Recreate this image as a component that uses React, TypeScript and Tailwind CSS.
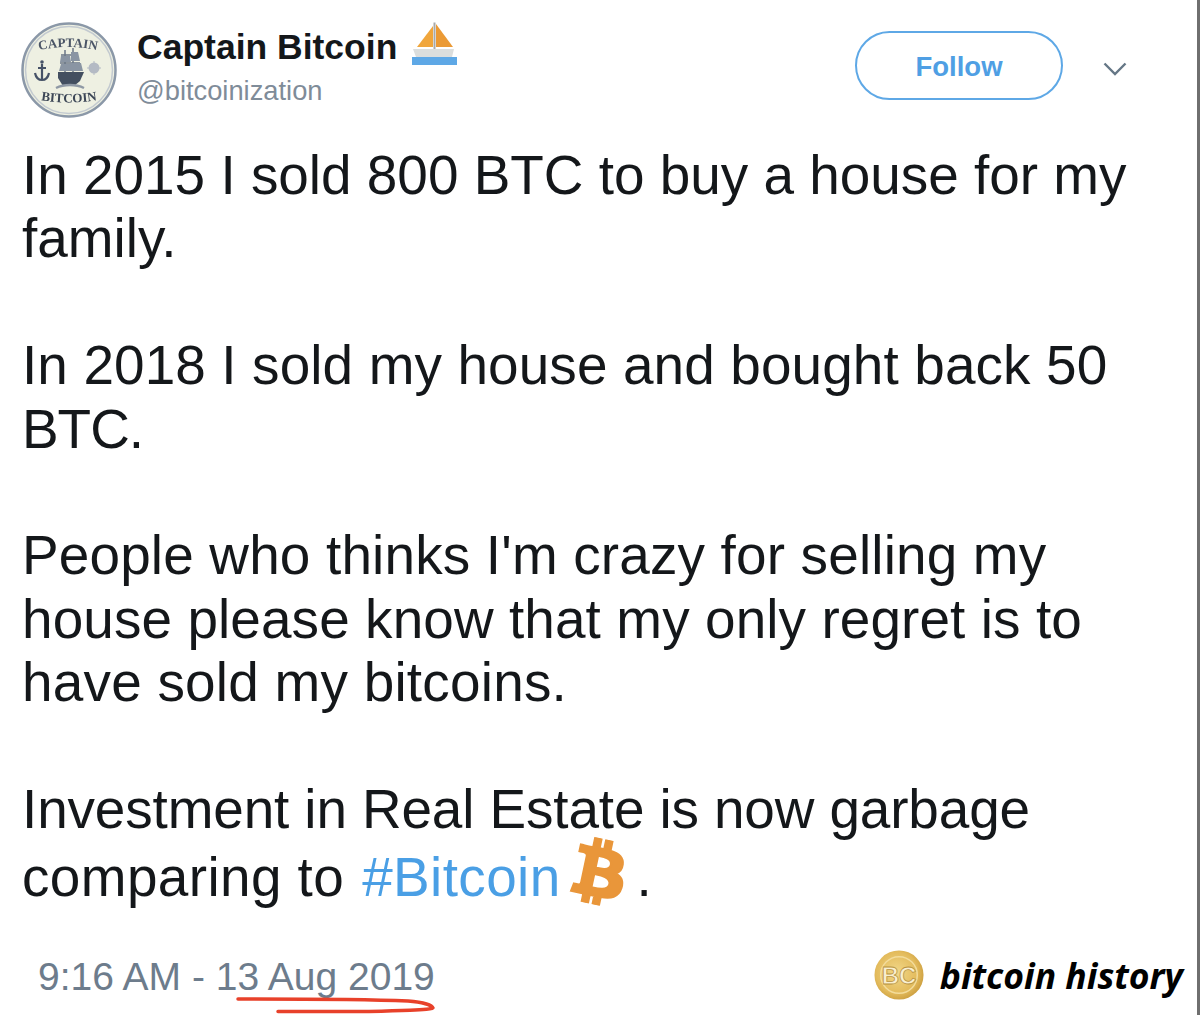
import { FaBtc } from "react-icons/fa";

const Avatar = () => (
  <svg width="96" height="96" viewBox="0 0 96 96" className="shrink-0 blur-[0.4px]">
    <defs>
      <path id="arcTop" d="M19 28Q47 22 75 28" />
      <path id="arcBottom" d="M19 78Q48 83 77 78" />
    </defs>
    <circle cx="48" cy="48" r="46.5" fill="#eef0e2" stroke="#8b98a8" strokeWidth="2.5" />
    <circle cx="48" cy="48" r="43.5" fill="none" stroke="#c3cad0" strokeWidth="1.5" />
    <text fontSize="13" fontWeight="700" fontFamily="'Liberation Serif', serif" fill="#4b5566">
      <textPath href="#arcTop" startOffset="50%" textAnchor="middle">
        CAPTAIN
      </textPath>
    </text>
    <text fontSize="13" fontWeight="700" fontFamily="'Liberation Serif', serif" fill="#3c4656">
      <textPath href="#arcBottom" startOffset="50%" textAnchor="middle">
        BITCOIN
      </textPath>
    </text>
    {/* anchor */}
    <path d="M21 42v15M17 46h8M14 51c1 5 4 7 7 7s6-2 7-7" fill="none" stroke="#465267" strokeWidth="2.2" />
    <circle cx="21" cy="40" r="1.8" fill="#465267" />
    {/* ship */}
    <path d="M44 28v30M52 26v32M40 33h9M39 41h11M47 33h10M46 41h13" stroke="#6b7686" strokeWidth="1.5" />
    <path d="M40 34h9l1 6H39zM40 42h10l1 7H38zM50 30h7l2 9H50zM50 41h10l2 8H50z" fill="#8a95a3" />
    <path d="M37 50h26l-4 9-6 5H42l-5-8z" fill="#434f60" />
    <path d="M35 66c8-4 20-4 28 0" stroke="#8f99a5" strokeWidth="2.5" fill="none" />
    {/* compass */}
    <circle cx="73" cy="46" r="5.5" fill="#b4bac4" />
    <path d="M73 39v14M66 46h14" stroke="#b4bac4" strokeWidth="1" />
  </svg>
);

const Sailboat = () => (
  <svg width="45" height="43" viewBox="0 0 45 43" className="shrink-0">
    <path d="M21 4 5 25h16z" fill="#f0a63c" />
    <path d="M24 2l17 23H24z" fill="#eb9a35" />
    <path d="M21.500 0.500H23.500V28H21.500z" fill="#a8a9a8" />
    <path d="M1 27h41l-2 8H4z" fill="#dcdedd" />
    <path d="M0 35h45v8H0z" fill="#5ea8e6" />
  </svg>
);

const Coin = () => (
  <svg width="50" height="50" viewBox="0 0 52 52" className="shrink-0">
    <defs>
      <radialGradient id="coin" cx="45%" cy="45%" r="60%">
        <stop offset="0%" stopColor="#f2d889" />
        <stop offset="70%" stopColor="#e3bb5c" />
        <stop offset="100%" stopColor="#c99b3c" />
      </radialGradient>
    </defs>
    <circle cx="26" cy="26" r="25.5" fill="url(#coin)" />
    <circle cx="26" cy="26" r="19" fill="none" stroke="#f3dc9b" strokeWidth="1.5" />
    <text x="26" y="35" textAnchor="middle" fontSize="25" fontWeight="700" fontFamily="'Liberation Sans Narrow', 'Liberation Sans', sans-serif" fill="#f9efcf" stroke="#b8923f" strokeWidth="0.8">
      BC
    </text>
  </svg>
);

export default function App() {
  return (
    <div className="relative h-[1015px] w-[1200px] overflow-hidden bg-white font-['Liberation_Sans',sans-serif] text-[#14171a]">
      <div className="absolute inset-y-0 right-0 w-[3px] bg-[#6f6f6f]" />

      <div className="flex h-[144px] items-start pl-[21px] pr-[73px] pt-[22px]">
        <Avatar />
        <div className="ml-[20px] flex flex-col">
          <div className="flex items-start">
            <span className="mt-[3px] text-[35.5px] font-bold leading-[44px]">Captain Bitcoin</span>
            <span className="ml-[15px]">
              <Sailboat />
            </span>
          </div>
          <span className="mt-[2px] text-[27.3px] leading-[40px] text-[#7f8c99]">@bitcoinization</span>
        </div>
        <div className="ml-auto mt-[9px] flex items-center">
          <button className="h-[69px] w-[208px] rounded-full border-2 border-[#5ea8e6] pt-[3px] text-[27.5px] font-bold text-[#4f9fe4]">
            Follow
          </button>
          <svg width="24" height="14" viewBox="0 0 24 14" className="ml-[40px] mt-[6px]">
            <path d="M1.5 1.5 12 12 22.5 1.5" fill="none" stroke="#657786" strokeWidth="2.4" />
          </svg>
        </div>
      </div>

      <div className="pl-[22px] text-[54.9px] leading-[63.4px]">
        <p>
          In 2015 I sold 800 BTC to buy a house for my
          <br />
          family.
        </p>
        <p className="mt-[63.4px]">
          <span className="tracking-[0.12px]">In 2018 I sold my house and bought back 50</span>
          <br />
          <span className="tracking-[-1px]">BTC.</span>
        </p>
        <p className="mt-[63.4px]">
          <span className="tracking-[0.17px]">People who thinks I'm crazy for selling my</span>
          <br />
          <span className="tracking-[0.1px]">house please know that my only regret is to</span>
          <br />
          <span className="tracking-[0.23px]">have sold my bitcoins.</span>
        </p>
        <p className="mt-[63.4px] tracking-[-0.125px]">Investment in Real Estate is now garbage</p>
        <p className="mt-[5px] flex h-[63.4px] items-center">
          <span className="tracking-[0.4px]">comparing to</span>
          <span className="ml-[18px] tracking-[0.4px] text-[#4a9fe5]">#Bitcoin</span>
          <FaBtc className="ml-[6px] -mt-[12px] rotate-[12deg] text-[#e9963a]" size={66} stroke="currentColor" strokeWidth={18} />
          <span className="ml-[4px]">.</span>
        </p>
      </div>

      <div className="mt-[41px] flex items-center justify-between pl-[38px] pr-[17px]">
        <span className="text-[39px] leading-[52px] text-[#6d7c8c]">9:16 AM - 13 Aug 2019</span>
        <div className="-mt-[4px] flex items-center">
          <Coin />
          <span className="ml-[16px] font-['Noto_Sans',sans-serif] text-[35.5px] font-bold italic leading-[52px] text-black">
            bitcoin history
          </span>
        </div>
      </div>

      <svg width="210" height="22" viewBox="0 0 210 22" className="absolute left-[236px] top-[993px]">
        <path
          d="M2 6c50 0 120 0 170 2 14 1 24 4 25 7 0 2-40 3-64 3.500H42"
          fill="none"
          stroke="#e8412a"
          strokeWidth="3.5"
          strokeLinecap="round"
        />
      </svg>
    </div>
  );
}
